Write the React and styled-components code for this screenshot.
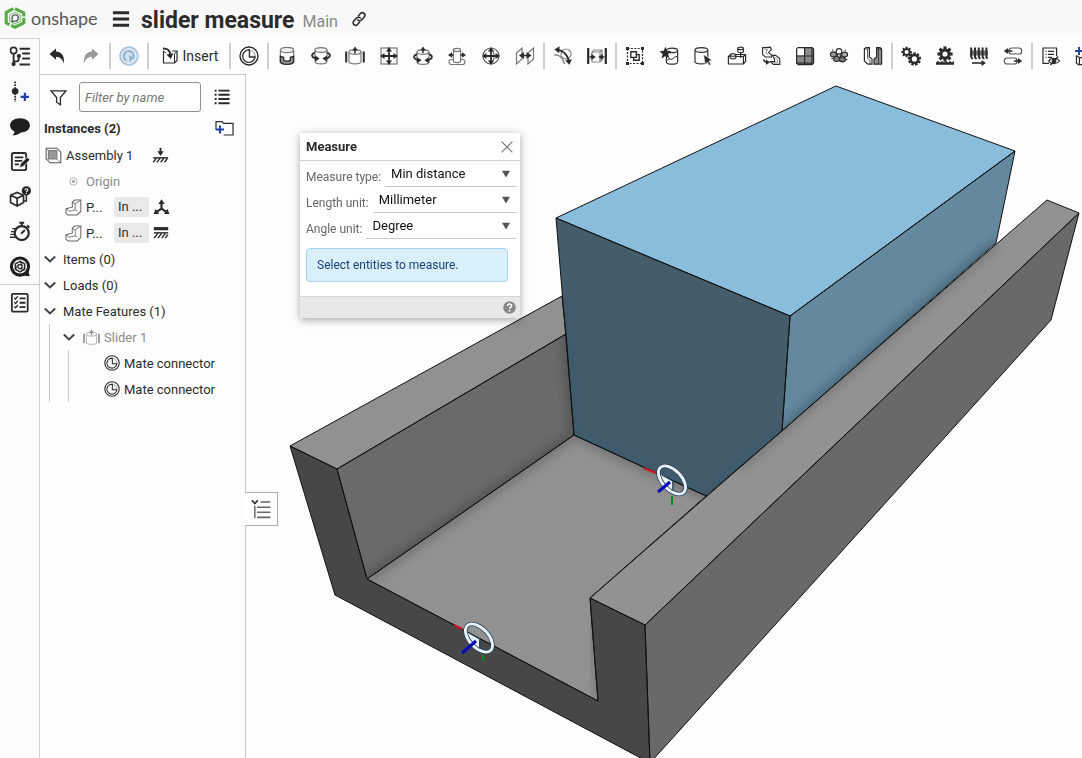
import React from 'react';
import styled, { createGlobalStyle } from 'styled-components';

const GlobalStyle = createGlobalStyle`
  * {
    box-sizing: border-box;
  }

  body {
    margin: 0;
    background: #fdfdfd;
    color: #2b2b2b;
    font-family: Roboto, "Liberation Sans", sans-serif;
    font-size: 13px;
  }

  button, input, select {
    font: inherit;
    color: inherit;
  }
`;

const Page = styled.div`
  display: flex;
  flex-direction: column;
  height: 100vh;
  overflow: hidden;
`;

const Header = styled.header`
  display: flex;
  align-items: center;
  flex: none;
  height: 38px;
  padding-left: 4px;
  background: linear-gradient(#f8f8f8 80%, #fbfbfb);
`;

const Brand = styled.a`
  display: flex;
  align-items: center;
  gap: 5px;
  width: 107px;
  padding-bottom: 2px;
  color: #555;
  font-family: Lato, sans-serif;
  font-size: 18px;
  line-height: 32px;
  text-decoration: none;
`;

const PlainButton = styled.button`
  display: flex;
  align-items: center;
  justify-content: center;
  flex: none;
  padding: 0;
  border: 0;
  background: none;
`;

const MenuButton = styled(PlainButton)`
  width: 20px;
  height: 32px;
`;

const DocumentName = styled.h1`
  margin: 0 8px 0 10px;
  padding-top: 4px;
  font-size: 23px;
  font-weight: 700;
  line-height: 34px;
`;

const Workspace = styled.span`
  margin-right: 12px;
  padding-top: 6px;
  color: #888;
  font-size: 16px;
  line-height: 32px;
`;

const Body = styled.div`
  display: flex;
  flex: 1;
  min-height: 0;
`;

const Rail = styled.nav`
  display: flex;
  flex-direction: column;
  flex: none;
  width: 40px;
  border-top: 1px solid #d0d2d6;
  border-right: 1px solid #cfcfcf;
  background: #fafbfb;
`;

const RailGroup = styled.div`
  & + & {
    border-top: 1px solid #cfcfcf;
  }
`;

const RailButton = styled(PlainButton)`
  width: 39px;
  height: 35px;
`;

const Main = styled.main`
  display: flex;
  flex: 1;
  flex-direction: column;
  min-width: 0;
`;

const Toolbar = styled.div`
  display: flex;
  align-items: center;
  flex: none;
  height: 36px;
  overflow: hidden;
`;

const Tool = styled(PlainButton)`
  width: ${({ $wide }) => ($wide ? 78 : 34)}px;
  height: 34px;
  gap: 3px;
  font-size: 14px;
`;

const Separator = styled.span`
  flex: none;
  width: 2px;
  height: 26px;
  margin: 0 1px;
  background: #cdcdcd;
`;

const Workarea = styled.div`
  display: flex;
  flex: 1;
  min-height: 0;
`;

const Panel = styled.aside`
  flex: none;
  width: 206px;
  border-top: 1px solid #c8c8cc;
  border-right: 1px solid #c8c8cc;
`;

const FilterRow = styled.div`
  display: flex;
  align-items: center;
  height: 44px;
  padding-left: 9px;
  gap: 11px;
`;

const FilterInput = styled.input`
  width: 122px;
  height: 30px;
  padding: 0 5px;
  border: 1px solid #8f8f94;
  border-radius: 3px;
  background: #fff;
  font-style: italic;

  &::placeholder {
    color: #757575;
    opacity: 1;
  }
`;

const PanelHeading = styled.div`
  display: flex;
  align-items: center;
  justify-content: space-between;
  height: 18px;
  margin-bottom: 5px;
  padding: 0 11px 0 4px;
`;

const HeadingText = styled.h2`
  margin: 0;
  font-size: 13px;
  font-weight: 700;
`;

const Tree = styled.ul`
  margin: 0;
  padding: 0;
  list-style: none;
`;

const Branch = styled(Tree)`
  margin-left: ${({ $indent }) => $indent}px;
  padding-left: ${({ $pad }) => $pad}px;
  border-left: 1px solid #c9cbd3;
`;

const Row = styled.div`
  display: flex;
  align-items: center;
  height: 26px;
  padding-left: ${({ $indent = 0 }) => $indent}px;
  gap: ${({ $gap = 4 }) => $gap}px;
  color: ${({ $muted }) => ($muted ? '#8c8c8c' : '#2b2b2b')};
  white-space: nowrap;
`;

const ItemName = styled.span`
  width: ${({ $width }) => $width}px;
`;

const Context = styled.span`
  width: 35px;
  padding-left: 4px;
  border-radius: 2px;
  background: #e9e9e9;
  line-height: 20px;
`;

const Canvas = styled.section`
  position: relative;
  flex: 1;
  min-width: 0;
`;

const Scene = styled.svg`
  display: block;
  width: 100%;
  height: 100%;
`;

const FlyoutTab = styled(PlainButton)`
  position: absolute;
  top: 418px;
  left: -1px;
  width: 33px;
  height: 34px;
  border: 1px solid #a9adbb;
  border-left: 0;
  background: #fff;
`;

const Dialog = styled.form`
  position: absolute;
  top: 59px;
  left: 54px;
  width: 220px;
  background: #fff;
  box-shadow: 0 2px 8px rgba(0, 0, 0, 0.35);
`;

const DialogHeader = styled.div`
  display: flex;
  align-items: center;
  justify-content: space-between;
  height: 28px;
  padding: 0 7px 0 6px;
  border-bottom: 1px solid #cfcfcf;
`;

const DialogBody = styled.div`
  padding: 0 4px 14px 6px;
`;

const Field = styled.div`
  display: flex;
  height: 26px;
  gap: 4px;
`;

const FieldLabel = styled.label`
  padding-top: 5px;
  color: #666;
  font-size: 12px;
  line-height: 22px;
`;

const SelectBox = styled.span`
  display: flex;
  flex: 1;
  align-items: center;
  min-width: 0;
  padding-right: 6px;
  border-bottom: 1px solid #c4c7cf;
`;

const Select = styled.select`
  flex: 1;
  min-width: 0;
  height: 25px;
  padding: 0 0 0 6px;
  border: 0;
  background: none;
  color: #111;
  appearance: none;
`;

const Message = styled.p`
  height: 34px;
  margin: 9px 8px 0 0;
  padding-left: 10px;
  border: 1px solid #a5d5ec;
  border-radius: 4px;
  background: #d9effa;
  color: #1c3f74;
  font-size: 12px;
  line-height: 32px;
`;

const DialogFooter = styled.div`
  display: flex;
  align-items: center;
  justify-content: flex-end;
  height: 22px;
  padding-right: 4px;
  border-top: 1px solid #d6d6d6;
  background: #e8e8e8;
`;

const Icon = ({ size = 20, children, ...rest }) => (
  <svg
    width={size}
    height={size}
    viewBox="0 0 20 20"
    fill="none"
    stroke="#2b2b2b"
    strokeWidth="1.2"
    aria-hidden="true"
    {...rest}
  >
    {children}
  </svg>
);

// solid arrow head with its tip at x, y; 0 degrees points right
const Head = ({ x, y, r = 0, s = 1, fill = '#2b2b2b' }) => (
  <path d="M0 0L-5 -3.4V3.4Z" fill={fill} stroke="none" transform={`translate(${x} ${y}) rotate(${r}) scale(${s})`} />
);

const Cylinder = ({ x = 10, y = 4, w = 6, h = 11, ry = 2.4, ...rest }) => (
  <g stroke="#777" {...rest}>
    <path d={`M${x - w} ${y}V${y + h}A${w} ${ry} 0 0 0 ${x + w} ${y + h}V${y}`} fill="#fff" />
    <ellipse cx={x} cy={y} rx={w} ry={ry} fill="#f1f1f1" />
  </g>
);

const Gear = ({ x, y, r, n = 8, hole = 0.4 }) => (
  <g stroke="none" fill="#2b2b2b" transform={`translate(${x} ${y})`}>
    {Array.from({ length: n }, (_, i) => (
      <rect key={i} x={-r * 0.2} y={-r} width={r * 0.4} height={r} transform={`rotate(${(360 / n) * i})`} />
    ))}
    <circle r={r * 0.74} />
    <circle r={r * hole} fill="#fdfdfd" />
  </g>
);

const MateIcon = (props) => (
  <Icon {...props}>
    <circle cx="10" cy="10" r="9" fill="#fff" strokeWidth="1.4" />
    <circle cx="10" cy="10" r="6.2" fill="#eee" stroke="#999" strokeWidth="1" />
    <path d="M10.4 4A6.2 6.2 0 1 0 16 11H10.4Z" fill="#fff" strokeWidth="1.3" />
  </Icon>
);

const SliderIcon = (props) => (
  <Icon {...props}>
    <Cylinder y={6} h={9.5} />
    <path d="M1.2 5.5V16.5M18.8 5.5V16.5" strokeWidth="2" />
    <path d="M10 7.5V3" strokeWidth="1.5" />
    <Head x={10} y={0.6} r={-90} s={0.8} />
  </Icon>
);

const UndoIcon = ({ redo }) => (
  <Icon transform={redo ? 'scale(-1 1)' : undefined}>
    <path
      d="M2.5 8L9 2.4V5.6C14.8 6 17.8 10 16.8 17.5C15.4 13.2 13 11 9 10.8V13.8Z"
      fill={redo ? '#999' : '#2b2b2b'}
      stroke="none"
    />
  </Icon>
);

const UpdateIcon = () => (
  <Icon>
    <circle cx="10" cy="10" r="8.8" fill="#d3e1ed" stroke="#a9c4dc" strokeWidth="2" />
    <path d="M7.4 14.6A5 5 0 1 1 14.6 11" stroke="#8fb2d0" strokeWidth="2" />
    <path d="M10 9L16.4 12.4L12.6 13.4L11 17Z" fill="#8fb2d0" stroke="none" />
    <circle cx="10" cy="10" r="7.2" stroke="#f2f6fa" strokeWidth="0.9" />
  </Icon>
);

const InsertIcon = () => (
  <Icon>
    <path d="M3.5 5V17H14.5L17 14.5V5H12" />
    <path d="M14.5 17V8L17 5M3.5 5L6 7" strokeWidth="1" />
    <path d="M3 2.5C8 2.5 10 4 10.4 9" strokeWidth="2" />
    <Head x={10.8} y={13} r={80} s={1.05} />
  </Icon>
);

const FastenedIcon = () => (
  <Icon>
    <Cylinder x={10} y={4} w={6.6} h={11.5} ry={2.6} />
    <path
      d="M3.4 10.5V15.8C4.5 19.2 15.5 19.2 16.6 15.8V10.5L13.4 11.4V14C13 15.5 7 15.5 6.6 14V11.4Z"
      fill="#9a9a9a"
      stroke="#2b2b2b"
      strokeWidth="1.4"
    />
  </Icon>
);

const TurnArrows = () => (
  <>
    <path d="M4 6.5C0 8 0 11.5 5 12.4M16 6.5C20 8 20 11.5 15 12.4" strokeWidth="1.8" />
    <Head x={8.6} y={12.6} s={0.9} />
    <Head x={11.4} y={12.6} r={180} s={0.9} />
  </>
);

const RevoluteIcon = () => (
  <Icon>
    <Cylinder x={10} y={4} w={6} h={11.5} />
    <TurnArrows />
  </Icon>
);

const CylindricalIcon = () => (
  <Icon>
    <Cylinder x={10} y={6} w={6} h={10} />
    <g transform="translate(0 1.6)">
      <TurnArrows />
    </g>
    <path d="M10 7V3" strokeWidth="1.5" />
    <Head x={10} y={0.4} r={-90} s={0.8} />
  </Icon>
);

const Cross = () => (
  <>
    <path d="M10 4V16M4 10H16" strokeWidth="1.8" />
    <Head x={10} y={1} r={-90} s={0.9} />
    <Head x={10} y={19} r={90} s={0.9} />
    <Head x={1} y={10} r={180} s={0.9} />
    <Head x={19} y={10} s={0.9} />
  </>
);

const PlanarIcon = () => (
  <Icon>
    <rect x="2" y="2" width="16" height="16" stroke="#777" />
    <Cross />
  </Icon>
);

const PinSlotIcon = () => (
  <Icon>
    <rect x="2" y="13.5" width="16" height="5" rx="2.5" stroke="#777" fill="#fff" />
    <Cylinder x={10} y={4} w={3.6} h={11} ry={1.6} />
    <path d="M3.5 9H6.5M13.5 9H16.5" strokeWidth="1.6" />
    <Head x={1} y={9} r={180} s={0.8} />
    <Head x={19} y={9} s={0.8} />
  </Icon>
);

const BallIcon = () => (
  <Icon>
    <circle cx="10" cy="10" r="8" stroke="#555" />
    <path d="M10 2C14 6 14 14 10 18" stroke="#555" strokeWidth="1" />
    <Cross />
  </Icon>
);

const ParallelIcon = () => (
  <Icon>
    <path d="M1.5 7L7 2V13L1.5 18ZM13 7L18.5 2V13L13 18Z" stroke="#777" />
    <path d="M7.5 9.5H13" strokeWidth="1.6" />
    <Head x={4} y={9.5} r={180} />
    <Head x={16.5} y={9.5} />
  </Icon>
);

const TangentIcon = () => (
  <Icon>
    <path d="M1 9C6 8.4 10 12 11.5 18" stroke="#777" />
    <circle cx="13" cy="8" r="5" stroke="#888" />
    <path d="M4 3.6C9 4 14.5 8 15.8 15" strokeWidth="1.8" />
    <Head x={1.4} y={3.4} r={184} />
    <Head x={16.4} y={18.8} r={80} />
  </Icon>
);

const WidthIcon = () => (
  <Icon>
    <path d="M1.2 2V18M18.8 2V18" strokeWidth="2.2" />
    <path d="M5 6L7 4H15V14L13 16H5ZM5 6H13L15 4M13 6V16" stroke="#888" />
    <path d="M2.5 11H5M15 11H17.5" strokeWidth="1.6" />
    <Head x={8.8} y={11} s={0.9} />
    <Head x={11.2} y={11} r={180} s={0.9} />
  </Icon>
);

const GroupIcon = () => (
  <Icon>
    <rect x="2.5" y="2.5" width="15" height="15" strokeDasharray="2 1.4" />
    <path d="M1 1H4V4H1ZM16 1H19V4H16ZM1 16H4V19H1ZM16 16H19V19H16Z" fill="#2b2b2b" stroke="none" />
    <path d="M5.8 5.8H11.4V11.4H5.8ZM11.4 8.6H14.2V14.2H8.6V11.4" strokeWidth="1.4" />
  </Icon>
);

const MateStarIcon = () => (
  <Icon>
    <Cylinder x={13} y={4.4} w={5.6} h={11.5} ry={2.2} stroke="#333" />
    <path d="M7.5 13.5C9 14.8 10 14 10 12.5C12 14 14.5 13 15 11.5L18.5 10" strokeWidth="1" />
    <path
      d="M6.4 0.8L8.1 4.8L12.4 5.2L9.2 8.1L10.2 12.4L6.4 10.1L2.6 12.4L3.6 8.1L0.4 5.2L4.7 4.8Z"
      fill="#2b2b2b"
      stroke="none"
    />
  </Icon>
);

const CylinderCursorIcon = () => (
  <Icon>
    <Cylinder x={8.4} y={4} w={6.4} h={11.5} stroke="#333" />
    <path d="M10.6 8.4L19.4 14.4L16 15L18 18.4L16.2 19.4L14.4 16L12 18.4Z" fill="#2b2b2b" stroke="#fdfdfd" strokeWidth="0.6" />
  </Icon>
);

const BlocksIcon = () => (
  <Icon>
    <path d="M1.4 10.5L4 8.5H18.6V15.5L16.4 18H1.4ZM1.4 10.5H16.4V18M16.4 10.5L18.6 8.5" fill="#fff" />
    <Cylinder x={6} y={9} w={2.8} h={2.5} ry={1.3} stroke="#333" />
    <path d="M13.6 6V12" />
    <Cylinder x={13.6} y={2.4} w={2.8} h={3} ry={1.3} stroke="#333" />
  </Icon>
);

const ChevronsIcon = () => (
  <Icon strokeWidth="1.1">
    <path d="M1.6 1.6H5L9.4 1.2L10.4 3.6L7.6 6.6L10.4 8.8V11H4.4L1.6 8.6Z" fill="#fff" />
    <path d="M3.6 3.4H6.6L4.8 6.6L7.4 9" stroke="#888" strokeWidth="0.9" />
    <path d="M11.4 9.4H14.6L18.8 12.6V18.4H12.4L9.4 15.6H13.6V13.2Z" fill="#fff" />
    <path d="M14 11.4L16.6 13.4V16.6H12.4" stroke="#888" strokeWidth="0.9" />
    <path d="M2.4 13.4C3.2 15.6 4.4 16.2 6 16.2" strokeWidth="1.4" />
    <Head x={9} y={16.2} s={0.8} />
  </Icon>
);

const GridIcon = () => (
  <Icon>
    <path d="M3 1.6H17L18.6 3V17L17 18.6H3L1.6 17V3Z" fill="#8a8a8a" />
    <path d="M2.4 2.4H9V9.4H2.4Z" fill="#fff" stroke="none" />
    <path d="M9.6 1.6V18.6M1.6 10H18.6M17 1.6V18.6M1.6 17.2H17.4" />
  </Icon>
);

const ClusterIcon = () => (
  <Icon strokeWidth="1.1">
    <circle cx="10" cy="5.4" r="2.8" fill="#fff" />
    <ellipse cx="4.4" cy="8.4" rx="3" ry="2.5" fill="#999" />
    <ellipse cx="15.6" cy="8.6" rx="3" ry="2.5" fill="#aaa" />
    <ellipse cx="7.6" cy="13" rx="3" ry="2.5" fill="#888" />
    <ellipse cx="13.4" cy="13.4" rx="3" ry="2.5" fill="#777" />
    <circle cx="10" cy="9.6" r="1.8" fill="#bbb" />
    <path d="M3 4H4.4M15.6 4.2H17M2.4 12.6H3.8M17 13.6H18.4" />
  </Icon>
);

const MirrorIcon = () => (
  <Icon>
    <path d="M1.4 3L3 1.6H6.4V11L9 13V18.2H5L1.4 15Z" fill="#fff" />
    <path d="M4.6 3V12.6L7 14.6V18M1.4 3H4.6L6.4 1.6" strokeWidth="0.8" />
    <path d="M18.6 3L17 1.6H13.6V11L11 13V18.2H18.6Z" fill="#8d8d8d" />
    <path d="M15.4 3V18M18.6 3H15.4L13.6 1.6" strokeWidth="0.8" />
  </Icon>
);

const GearsIcon = () => (
  <Icon>
    <Gear x={5.6} y={6} r={5.2} />
    <Gear x={13.4} y={13} r={6.6} n={9} />
  </Icon>
);

const RackIcon = () => (
  <Icon>
    <Gear x={10} y={8} r={7.6} hole={0.34} />
    <path d="M1 18.8V16.6L3 15L5 16.6L7 15L9 16.6L11 15L13 16.6L15 15L17 16.6L19 15V18.8Z" fill="#2b2b2b" stroke="none" />
  </Icon>
);

const ScrewIcon = () => (
  <Icon>
    <path d="M1 7H19" stroke="#777" strokeWidth="5" />
    <path d="M2.2 1.6V11L3.6 13M6 1.6V11L7.4 13M9.8 1.6V11L11.2 13M13.6 1.6V11L15 13M17.4 1.6V11L18.4 12.6" strokeWidth="2" />
    <path d="M3 17H13" strokeWidth="1.6" />
    <Head x={17} y={17} s={0.9} />
  </Icon>
);

const LinearIcon = () => (
  <Icon>
    <rect x="6" y="2" width="12.6" height="6" rx="2.6" stroke="#555" fill="#fff" />
    <rect x="1.4" y="12" width="12.6" height="6" rx="2.6" stroke="#555" fill="#fff" />
    <path d="M4 5H9.4M11 15H16" strokeWidth="1.6" />
    <Head x={0.8} y={5} r={180} s={0.85} />
    <Head x={19.2} y={15} s={0.85} />
  </Icon>
);

const HideSheetIcon = () => (
  <Icon>
    <path d="M8 17.4H2V2H15.6V10" />
    <path d="M4.6 5.4H5.6M7 5.4H13M4.6 8.4H5.6M7 8.4H13M4.6 11.4H5.6M7 11.4H11" />
    <path d="M7.6 15C10 11.6 16 11.6 18.6 15C16 18.4 10 18.4 7.6 15Z" fill="#fff" />
    <circle cx="13" cy="15" r="1.8" fill="#2b2b2b" />
    <path d="M9.4 19L17 10.6" strokeWidth="1.5" />
  </Icon>
);

const AddBoxIcon = () => (
  <Icon>
    <path d="M1.4 9.6V17L3.4 18.6H14V10M1.4 9.6L4.4 11.6V18.6M4.4 11.6H14" />
    <path d="M4 1V9M0 5H8" stroke="#2346a0" strokeWidth="2" />
  </Icon>
);

const TreeIcon = () => (
  <Icon size={22}>
    <circle cx="4.2" cy="4" r="2.8" strokeWidth="1.5" />
    <path d="M4.2 7V16.6M4.2 14H7C8.6 14 9 13 9 10.5" strokeWidth="1.7" />
    <circle cx="4.2" cy="16.4" r="1.9" fill="#2b2b2b" stroke="none" />
    <circle cx="9" cy="9.2" r="1.9" fill="#2b2b2b" stroke="none" />
    <path d="M9.6 2.4H19M12 6.8H19M12 11.4H19M9.6 16.8H19" strokeWidth="1.8" />
  </Icon>
);

const AddFeatureIcon = () => (
  <Icon size={22}>
    <path d="M5.6 0.4V19" strokeWidth="1.6" strokeDasharray="1.6 1" />
    <circle cx="5.6" cy="9.4" r="3" fill="#2b2b2b" stroke="none" />
    <path d="M14.4 10.6V18.2M10.6 14.4H18.2" stroke="#1c3fa8" strokeWidth="2" />
  </Icon>
);

const CommentIcon = () => (
  <Icon size={22}>
    <path d="M10 2C15.4 2 19 4.8 19 8.6C19 12.4 15.4 14.8 10.8 15C8.6 16.8 6 17.6 3 17.6C4.4 16.4 5 15.2 5 14C2.4 12.8 1 11 1 8.6C1 4.8 4.6 2 10 2Z" fill="#1f1f1f" stroke="none" />
  </Icon>
);

const NotesIcon = () => (
  <Icon size={22}>
    <rect x="2.6" y="1.8" width="13" height="15.6" rx="1.5" strokeWidth="1.7" />
    <path d="M5.2 5.8H13M5.2 9H12M5.2 12.2H9" strokeWidth="1.6" />
    <path d="M9.6 15.2L10.4 11.8L16.6 5.6L19 8L12.8 14.2Z" fill="#1f1f1f" stroke="#fafbfb" strokeWidth="0.7" />
  </Icon>
);

const PartHelpIcon = () => (
  <Icon size={22}>
    <path d="M1.4 8.4L7.4 5.8L13.2 8.4V15L7.4 18.2L1.4 15ZM1.4 8.4L7.4 11.2L13.2 8.4M7.4 11.2V18.2" strokeWidth="1.5" />
    <path d="M13 13.6H15.8V8.2" strokeWidth="1.4" />
    <circle cx="15.8" cy="4.4" r="4.2" fill="#1f1f1f" stroke="none" />
    <path d="M14.4 3.8C14.4 2 17.2 2 17.2 3.7C17.2 4.6 15.8 4.6 15.8 5.6M15.8 6.4V7.2" stroke="#fff" strokeWidth="1" />
  </Icon>
);

const StopwatchIcon = () => (
  <Icon size={22}>
    <circle cx="11.6" cy="11" r="6.4" strokeWidth="2" />
    <path d="M9.4 1.6H13.8M11.6 1.6V4.4M16.4 4L18.4 6" strokeWidth="1.9" />
    <path d="M11 11.6L14.4 8.2" strokeWidth="1.7" />
    <path d="M3 7H6.4M1.8 9.6H5M1.2 12.2H4.8M0.8 14.8H6" strokeWidth="1.2" />
  </Icon>
);

const CubeChatIcon = () => (
  <Icon size={22}>
    <circle cx="10" cy="9.6" r="7.8" strokeWidth="2.8" stroke="#1f1f1f" />
    <path d="M12 17.8L18.8 18.4L17.4 12.6Z" fill="#1f1f1f" stroke="none" />
    <path d="M10 4.8L14.2 7.2V12L10 14.4L5.8 12V7.2Z" strokeWidth="1.4" />
    <circle cx="10" cy="9.6" r="1.9" strokeWidth="1.2" />
    <path d="M10 4.8L12 8.4M14.2 12L10.4 11.8M5.8 12L7.8 8.4" strokeWidth="0.9" />
  </Icon>
);

const ChecklistIcon = () => (
  <Icon size={22}>
    <rect x="2.6" y="1.6" width="14.4" height="16.2" rx="1" strokeWidth="1.6" />
    <path d="M4.8 5.2L6 6.4L8 3.8M4.8 9.2L6 10.4L8 7.8M4.8 13.2L6 14.4L8 11.8" strokeWidth="1.2" />
    <path d="M9.6 5.8H15M9.6 9.8H15M9.6 13.8H15" strokeWidth="1.7" />
  </Icon>
);

const ChevronIcon = () => (
  <Icon size={12}>
    <path d="M1.4 6L10 14L18.6 6" stroke="#444" strokeWidth="3.4" />
  </Icon>
);

const PartIcon = () => (
  <Icon size={17} stroke="#666">
    <path d="M1.2 11.4L8.6 9.6V3.8L11.4 1.2H18.6V14.6L14.2 18.8H3.4L1.2 16.8Z" fill="#fff" />
    <path d="M8.6 3.8L12 5.6V12.8L5 14.4L1.2 11.4M12 5.6L18.4 1.6M12 12.8L14.4 14.2" strokeWidth="1" />
  </Icon>
);

const AssemblyIcon = () => (
  <Icon size={17} stroke="#555">
    <path d="M1.4 1.4H14L18.6 6V18.6H6L1.4 14Z" fill="#fff" />
    <path d="M4 4H14V14H4Z" fill="#999" stroke="#777" />
    <path d="M1.4 1.4L5 5M14 14L18 18" stroke="#888" strokeWidth="0.9" />
  </Icon>
);

const GroundIcon = () => (
  <Icon size={17}>
    <path d="M10 1V7" strokeWidth="2.2" />
    <Head x={10} y={10.6} r={90} s={1.1} />
    <path d="M1.4 12.8H19" strokeWidth="1.8" />
    <path d="M1.4 18L5 13.4M5.8 18L9.4 13.4M10.2 18L13.8 13.4M14.6 18L18.2 13.4" strokeWidth="1.7" />
  </Icon>
);

const FixedIcon = () => (
  <Icon size={16}>
    <path d="M1 4.6H19" strokeWidth="4" />
    <path d="M1 9.8H19" strokeWidth="1.8" />
    <path d="M1.4 16.4L6 10.4M6.2 16.4L10.8 10.4M11 16.4L15.6 10.4M15.4 16.4L18.6 12" strokeWidth="1.8" />
  </Icon>
);

const DegreesIcon = () => (
  <Icon size={17}>
    <path d="M10 11.4V4M10 11.4L4 15.4M10 11.4L16 15.4" strokeWidth="2.6" />
    <Head x={10} y={0.4} r={-90} s={1.1} />
    <Head x={0.6} y={17.6} r={146} s={1.1} />
    <Head x={19.4} y={17.6} r={34} s={1.1} />
  </Icon>
);

const OriginIcon = () => (
  <Icon size={9} stroke="#aaa">
    <circle cx="10" cy="10" r="8" strokeWidth="2" />
    <circle cx="10" cy="10" r="3.2" fill="#999" stroke="none" />
  </Icon>
);

const tools = [
  [
    ['Undo', <UndoIcon />],
    ['Redo', <UndoIcon redo />],
  ],
  [['Update', <UpdateIcon />]],
  [['Insert', <InsertIcon />, true]],
  [['Mate connector', <MateIcon />]],
  [
    ['Fastened mate', <FastenedIcon />],
    ['Revolute mate', <RevoluteIcon />],
    ['Slider mate', <SliderIcon />],
    ['Planar mate', <PlanarIcon />],
    ['Cylindrical mate', <CylindricalIcon />],
    ['Pin slot mate', <PinSlotIcon />],
    ['Ball mate', <BallIcon />],
    ['Parallel mate', <ParallelIcon />],
  ],
  [
    ['Tangent mate', <TangentIcon />],
    ['Width mate', <WidthIcon />],
  ],
  [
    ['Group', <GroupIcon />],
    ['Create part in context', <MateStarIcon />],
    ['Select part', <CylinderCursorIcon />],
    ['Snap mode', <BlocksIcon />],
    ['Replicate', <ChevronsIcon />],
    ['Linear pattern', <GridIcon />],
    ['Circular pattern', <ClusterIcon />],
    ['Mirror', <MirrorIcon />],
  ],
  [
    ['Gear relation', <GearsIcon />],
    ['Rack and pinion relation', <RackIcon />],
    ['Screw relation', <ScrewIcon />],
    ['Linear relation', <LinearIcon />],
  ],
  [
    ['Display states', <HideSheetIcon />],
    ['Add configuration', <AddBoxIcon />],
  ],
];

const railTop = [
  ['Versions', <TreeIcon />],
  ['Add feature', <AddFeatureIcon />],
  ['Comments', <CommentIcon />],
  ['Notes', <NotesIcon />],
  ['Part help', <PartHelpIcon />],
  ['Performance', <StopwatchIcon />],
  ['Ask', <CubeChatIcon />],
];

const fields = [
  ['measure-type', 'Measure type:', 'Min distance'],
  ['length-unit', 'Length unit:', 'Millimeter'],
  ['angle-unit', 'Angle unit:', 'Degree'],
];

const Connector = ({ x, y, red, blue, green }) => (
  <g transform={`translate(${x} ${y})`} fill="none">
    <path d="M-12 -6L0 1V12C-5 10 -11 2 -12 -6Z" fill="#e9f1f7" />
    <g transform="rotate(47)">
      <ellipse rx="17" ry="9.6" stroke="#23455f" strokeWidth="4.4" />
      <ellipse rx="17" ry="9.6" stroke="#eaf2f8" strokeWidth="2.8" />
    </g>
    <path d="M-10 -5L1 1V11" stroke="#23455f" strokeWidth="1.2" />
    <path d={red} stroke="#cc1020" strokeWidth="2" />
    <path d={green} stroke="#0a8a14" strokeWidth="2" />
    <path d={blue} stroke="#0a0ab8" strokeWidth="3.2" />
  </g>
);

const faces = {
  leftTop: '290,446 562,296 566,334 337,469',
  leftInner: '337,469 566,334 574,435 367,579',
  floor: '367,579 574,435 706,496 590,598 598,701',
  front: '290,446 337,469 367,579 598,701 590,598 645,625 650,763 335,595',
  boxTop: '556,218 836,86 1015,151 790,316',
  boxFront: '556,218 790,316 782,431 706,496 574,435',
  boxSide: '790,316 1015,151 996,243 782,431',
  rightTop: '590,598 1047,200 1079,213 645,625',
  rightOuter: '645,625 1079,213 1051,320 650,763',
};

const Model = () => (
  <Scene viewBox="246 74 836 684" preserveAspectRatio="xMinYMin slice" role="img" aria-label="Slider assembly">
    <defs>
      <filter id="soft" x="-20%" y="-20%" width="140%" height="140%">
        <feGaussianBlur stdDeviation="5" />
      </filter>
      {Object.entries(faces).map(([name, points]) => (
        <clipPath id={`clip-${name}`} key={name}>
          <polygon points={points} />
        </clipPath>
      ))}
    </defs>

    <g strokeLinejoin="round">
      <polygon points={faces.leftTop} fill="#919191" />
      <polygon points={faces.leftInner} fill="#6a6a6a" />
      <polygon points={faces.floor} fill="#919191" />
      <polygon points={faces.front} fill="#474747" />
      <polygon points={faces.boxTop} fill="#8abddc" />
      <polygon points={faces.boxFront} fill="#455c6b" />
      <polygon points={faces.boxSide} fill="#64889e" />
      <polygon points={faces.rightTop} fill="#929292" />
      <polygon points={faces.rightOuter} fill="#696969" />
    </g>

    {/* contact shading where faces meet */}
    <g fill="none" strokeWidth="8" opacity="0.45">
      <g clipPath="url(#clip-leftInner)">
        <path d="M367 579L574 435L566 334" stroke="#333" filter="url(#soft)" />
      </g>
      <g clipPath="url(#clip-floor)">
        <path d="M367 579L574 435L706 496" stroke="#444" filter="url(#soft)" />
        <path d="M600 703L592 598" stroke="#555" filter="url(#soft)" />
      </g>
      <g clipPath="url(#clip-boxSide)">
        <path d="M782 431L996 243" stroke="#223746" filter="url(#soft)" />
      </g>
      <g clipPath="url(#clip-rightTop)">
        <path d="M740 467L996 243" stroke="#555" filter="url(#soft)" />
      </g>
      <g clipPath="url(#clip-boxFront)">
        <path d="M562 300L574 435L706 496L782 431" stroke="#2f5873" filter="url(#soft)" />
      </g>
    </g>

    <g fill="none" stroke="#111" strokeLinejoin="round">
      {Object.entries(faces).map(([name, points]) => (
        <polygon points={points} key={name} />
      ))}
    </g>

    <Connector x={672} y={480} red="M-28 -12L-16 -7" blue="M-14 12L-2 2" green="M0 16V25" />
    <Connector x={479} y={638} red="M-25 -13L-17 -9" blue="M-17 15L-3 3" green="M4 16V23" />
  </Scene>
);

const MeasureDialog = () => (
  <Dialog>
    <DialogHeader>
      <HeadingText>Measure</HeadingText>
      <PlainButton type="button" aria-label="Close">
        <Icon size={12}>
          <path d="M1 1L19 19M19 1L1 19" stroke="#777" strokeWidth="2" />
        </Icon>
      </PlainButton>
    </DialogHeader>
    <DialogBody>
      {fields.map(([id, label, value]) => (
        <Field key={id}>
          <FieldLabel htmlFor={id}>{label}</FieldLabel>
          <SelectBox>
            <Select id={id}>
              <option>{value}</option>
            </Select>
            <Icon size={8}>
              <path d="M0 2H20L10 19Z" fill="#555" stroke="none" />
            </Icon>
          </SelectBox>
        </Field>
      ))}
      <Message>Select entities to measure.</Message>
    </DialogBody>
    <DialogFooter>
      <PlainButton type="button" aria-label="Help">
        <Icon size={13}>
          <circle cx="10" cy="10" r="9.6" fill="#888" stroke="none" />
          <path d="M6.8 7.8C6.8 3.6 13.2 3.8 13.2 7.6C13.2 9.8 10 9.8 10 12.4M10 14V16.4" stroke="#fff" strokeWidth="2.2" />
        </Icon>
      </PlainButton>
    </DialogFooter>
  </Dialog>
);

const InstancePanel = () => (
  <Panel>
    <FilterRow>
      <Icon size={19}>
        <path d="M2.2 3H17.8L12 10V17.6L8 15V10Z" strokeWidth="1.4" />
      </Icon>
      <FilterInput aria-label="Filter by name" placeholder="Filter by name" />
      <PlainButton type="button" aria-label="List view">
        <Icon>
          <path d="M2.6 3.6H4.6M2.6 7.8H4.6M2.6 12H4.6M2.6 16.2H4.6M6.4 3.6H17.6M6.4 7.8H17.6M6.4 12H17.6M6.4 16.2H17.6" strokeWidth="1.9" />
        </Icon>
      </PlainButton>
    </FilterRow>
    <PanelHeading>
      <HeadingText>Instances (2)</HeadingText>
      <PlainButton type="button" aria-label="New folder">
        <Icon>
          <path d="M2 8V3.6H8L9.6 5.4H19V17H9.6M2 8V12" strokeWidth="1.2" />
          <path d="M6 7.6V15.6M2 11.6H10" stroke="#1c3fa8" strokeWidth="2" />
        </Icon>
      </PlainButton>
    </PanelHeading>

    <Tree>
      <li>
        <Row $indent={5}>
          <AssemblyIcon />
          <ItemName $width={82}>Assembly 1</ItemName>
          <GroundIcon />
        </Row>
      </li>
      <li>
        <Row $indent={29} $gap={8} $muted>
          <OriginIcon />
          Origin
        </Row>
      </li>
      <li>
        <Row $indent={25}>
          <PartIcon />
          <ItemName $width={24}>P...</ItemName>
          <Context>In ...</Context>
          <DegreesIcon />
        </Row>
      </li>
      <li>
        <Row $indent={25}>
          <PartIcon />
          <ItemName $width={24}>P...</ItemName>
          <Context>In ...</Context>
          <FixedIcon />
        </Row>
      </li>
      <li>
        <Row $indent={4} $gap={7}>
          <ChevronIcon />
          Items (0)
        </Row>
      </li>
      <li>
        <Row $indent={4} $gap={7}>
          <ChevronIcon />
          Loads (0)
        </Row>
      </li>
      <li>
        <Row $indent={4} $gap={7}>
          <ChevronIcon />
          Mate Features (1)
        </Row>
        <Branch $indent={9} $pad={13}>
          <li>
            <Row $muted>
              <ChevronIcon />
              <span />
              <SliderIcon size={17} opacity="0.5" />
              Slider 1
            </Row>
            <Branch $indent={5} $pad={35}>
              <li>
                <Row>
                  <MateIcon size={16} />
                  Mate connector
                </Row>
              </li>
              <li>
                <Row>
                  <MateIcon size={16} />
                  Mate connector
                </Row>
              </li>
            </Branch>
          </li>
        </Branch>
      </li>
    </Tree>
  </Panel>
);

const App = () => (
  <Page>
    <GlobalStyle />
    <Header>
      <Brand href="#">
        <Icon size={22}>
          <path d="M8.4 1.4L2 5V14.4L5 16" stroke="#57ab45" strokeWidth="2.8" />
          <path d="M6.6 16.8L10 18.4L18 14.4V10" stroke="#57ab45" strokeWidth="2.8" />
          <path d="M10 1.4L18 5.4V8.6" stroke="#57ab45" strokeWidth="2.8" />
          <path d="M10 4.6L14.8 7.4V12.8L10 15.4L5.2 12.8V7.4Z" stroke="#57ab45" strokeWidth="0.8" />
          <path d="M7.4 13.4V9.4A2.8 2.8 0 1 1 10 12.8Z" stroke="#555" strokeWidth="1.2" />
        </Icon>
        onshape
      </Brand>
      <MenuButton type="button" aria-label="Menu">
        <Icon size={18}>
          <path d="M1 3H19M1 10H19M1 17H19" strokeWidth="3.2" />
        </Icon>
      </MenuButton>
      <DocumentName>slider measure</DocumentName>
      <Workspace>Main</Workspace>
      <PlainButton type="button" aria-label="Copy link">
        <Icon size={18}>
          <g transform="rotate(-48 10 10)" strokeWidth="1.7">
            <path d="M8.4 12.8H4.4A2.8 2.8 0 0 1 4.4 7.2H9A2.8 2.8 0 0 1 11.6 11" />
            <path d="M11.6 7.2H15.6A2.8 2.8 0 0 1 15.6 12.8H11A2.8 2.8 0 0 1 8.4 9" />
          </g>
        </Icon>
      </PlainButton>
    </Header>

    <Body>
      <Rail>
        <RailGroup>
          {railTop.map(([label, icon]) => (
            <RailButton type="button" aria-label={label} key={label}>{icon}</RailButton>
          ))}
        </RailGroup>
        <RailGroup>
          <RailButton type="button" aria-label="Tasks">
            <ChecklistIcon />
          </RailButton>
        </RailGroup>
      </Rail>

      <Main>
        <Toolbar>
          {tools.map((group, i) => (
            <React.Fragment key={i}>
              {i > 0 && <Separator />}
              {group.map(([label, icon, wide]) => (
                <Tool type="button" aria-label={label} $wide={wide} key={label}>
                  {icon}
                  {wide && label}
                </Tool>
              ))}
            </React.Fragment>
          ))}
        </Toolbar>

        <Workarea>
          <InstancePanel />
          <Canvas>
            <Model />
            <FlyoutTab type="button" aria-label="Show list">
              <Icon size={22}>
                <path d="M1.6 2L4.4 5L7.2 2" strokeWidth="1.5" />
                <path d="M4.4 7V18.4" stroke="#555" />
                <path d="M9.6 3.6H18.6M6.4 8.4H18.6M6.4 13H18.6M6.4 17.6H18.6" stroke="#666" strokeWidth="1.4" />
              </Icon>
            </FlyoutTab>
            <MeasureDialog />
          </Canvas>
        </Workarea>
      </Main>
    </Body>
  </Page>
);

export default App;
